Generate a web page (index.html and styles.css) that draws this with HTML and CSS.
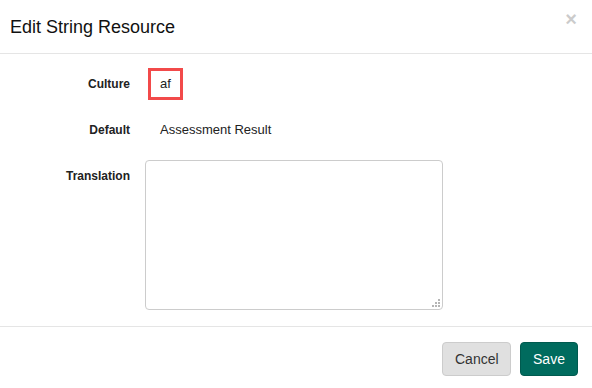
FILE: index.html
```html
<!DOCTYPE html>
<html lang="en">
    <head>
        <meta charset="UTF-8" />
        <meta name="viewport" content="width=device-width, initial-scale=1.0" />
        <title>Edit String Resource</title>
        <link rel="stylesheet" href="styles.css">
    </head>
    <body>
        <div class="modal">
            <div class="modal-header">
                <h4 class="modal-title">Edit String Resource</h4>
                <button class="close" type="button">&times;</button>
            </div>
            <div class="modal-body">
                <div class="form-row">
                    <label class="form-label">Culture</label>
                    <div class="form-value">
                        <span class="culture-box">af</span>
                    </div>
                </div>
                <div class="form-row">
                    <label class="form-label">Default</label>
                    <div class="form-value default-text">Assessment Result</div>
                </div>
                <div class="form-row translation-row">
                    <label class="form-label">Translation</label>
                    <div class="form-value textarea-wrap">
                        <textarea class="translation-input"></textarea>
                        <!-- 리사이즈 손잡이 -->
                        <svg class="resize-grip" width="9" height="9" viewBox="0 0 9 9">
                            <rect x="6" y="0" width="2" height="2" fill="#b5b5b5" />
                            <rect x="3" y="3" width="2" height="2" fill="#b5b5b5" />
                            <rect x="6" y="3" width="2" height="2" fill="#b5b5b5" />
                            <rect x="0" y="6" width="2" height="2" fill="#b5b5b5" />
                            <rect x="3" y="6" width="2" height="2" fill="#b5b5b5" />
                            <rect x="6" y="6" width="2" height="2" fill="#b5b5b5" />
                        </svg>
                    </div>
                </div>
            </div>
            <div class="modal-footer">
                <button class="button cancel-button" type="button">Cancel</button>
                <button class="button save-button" type="button">Save</button>
            </div>
        </div>
    </body>
</html>
```

FILE: styles.css
```css
body {
    margin: 0;
    font-family: "Liberation Sans", Arial, sans-serif;
    font-size: 13px;
    color: #333;
    background-color: #ffffff;
}
.modal {
    width: 592px;
    height: 388px;
}
.modal-header {
    display: flex;
    justify-content: space-between;
    align-items: center;
    height: 53px;
    padding: 0 15px 0 10px;
    border-bottom: 1px solid #e5e5e5;
}
.modal-title {
    margin: 0;
    font-size: 18px;
    font-weight: normal;
    line-height: 20px;
    color: #111;
}
.close {
    align-self: flex-start;
    margin-top: 9px;
    padding: 0;
    border: none;
    background: none;
    font-family: "Liberation Sans", Arial, sans-serif;
    font-size: 20px;
    font-weight: bold;
    line-height: 20px;
    color: #000;
    opacity: 0.2;
    cursor: pointer;
}
.modal-body {
    display: flex;
    flex-direction: column;
    gap: 20px;
    padding: 14px 0 16px;
}
.form-row {
    display: grid;
    grid-template-columns: 130px 1fr;
    column-gap: 15px;
    align-items: center;
}
.form-label {
    text-align: right;
    font-size: 12px;
    font-weight: bold;
    line-height: 16px;
    color: #222;
}
.translation-row {
    align-items: start;
}
.translation-row .form-label {
    padding-top: 8px;
}
.culture-box {
    display: inline-block;
    box-sizing: border-box;
    height: 32px;
    margin-left: 3px;
    padding: 0 9px;
    border: 3px solid #f24a4a;
    line-height: 26px;
    color: #222;
}
.default-text {
    padding-left: 15px;
    line-height: 20px;
    color: #222;
}
.textarea-wrap {
    position: relative;
    width: 298px;
}
.translation-input {
    display: block;
    box-sizing: border-box;
    width: 298px;
    height: 150px;
    margin: 0;
    border: 1px solid #cccccc;
    border-radius: 4px;
    resize: none;
    font-family: "Liberation Sans", Arial, sans-serif;
}
.resize-grip {
    position: absolute;
    right: 2px;
    bottom: 2px;
}
.modal-footer {
    display: flex;
    justify-content: flex-end;
    gap: 9px;
    padding: 15px 14px 0;
    border-top: 1px solid #e5e5e5;
}
.button {
    box-sizing: border-box;
    height: 34px;
    padding: 0 12px;
    border: 1px solid transparent;
    border-radius: 4px;
    font-family: "Liberation Sans", Arial, sans-serif;
    font-size: 14px;
    cursor: pointer;
}
.cancel-button {
    width: 69px;
    background-color: #e0e0e0;
    border-color: #cccccc;
    color: #333;
}
.save-button {
    width: 58px;
    background-color: #006b5e;
    border-color: #005a4f;
    color: #ffffff;
}
```
